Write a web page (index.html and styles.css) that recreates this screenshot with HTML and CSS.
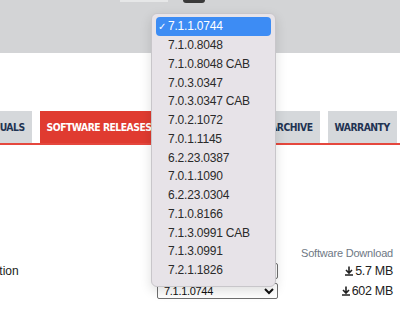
FILE: index.html
```html
<!DOCTYPE html>
<html lang="en">
<head>
    <meta charset="UTF-8">
    <meta name="viewport" content="width=device-width, initial-scale=1.0">
    <title>Software Releases</title>
    <link rel="stylesheet" href="styles.css">
</head>
<body>
    <header class="top">
        <span class="top-tab"></span>
        <span class="top-knob"></span>
    </header>

    <nav class="tabs">
        <a class="tab">MANUALS</a>
        <a class="tab active">SOFTWARE RELEASES</a>
        <a class="tab">PREVIOUS RELEASE ARCHIVE</a>
        <a class="tab">WARRANTY</a>
    </nav>

    <section class="downloads">
        <div class="row head">
            <span></span>
            <span></span>
            <span class="col-title">Software Download</span>
        </div>
        <div class="row">
            <span class="name">Application</span>
            <select class="version"><option>7.1.1.0744</option></select>
            <span class="size"><svg class="dl" viewBox="0 0 10 10"><path d="M5 0.5v6M2 4l3 3 3-3M1 9h8" /></svg>5.7 MB</span>
        </div>
        <div class="row">
            <span class="name"></span>
            <select class="version"><option>7.1.1.0744</option></select>
            <span class="size"><svg class="dl" viewBox="0 0 10 10"><path d="M5 0.5v6M2 4l3 3 3-3M1 9h8" /></svg>602 MB</span>
        </div>
    </section>

    <!-- the open native select menu, floating over the page -->
    <ul class="menu">
        <li class="picked"><span class="check">&#10003;</span>7.1.1.0744</li>
        <li>7.1.0.8048</li>
        <li>7.1.0.8048 CAB</li>
        <li>7.0.3.0347</li>
        <li>7.0.3.0347 CAB</li>
        <li>7.0.2.1072</li>
        <li>7.0.1.1145</li>
        <li>6.2.23.0387</li>
        <li>7.0.1.1090</li>
        <li>6.2.23.0304</li>
        <li>7.1.0.8166</li>
        <li>7.1.3.0991 CAB</li>
        <li>7.1.3.0991</li>
        <li>7.2.1.1826</li>
    </ul>
</body>
</html>
```

FILE: styles.css
```css
*, *::before, *::after {
    box-sizing: border-box;
}

body {
    margin: 0;
    width: 400px;
    overflow: hidden;
    color: #222;
    font: 12px/1 'Liberation Sans', Arial, sans-serif;
    background: #fff;
}

.top {
    display: flex;
    align-items: flex-start;
    height: 53px;
    padding-left: 120px;
    background-color: #d3d4d6;
}

.top-tab {
    width: 48px;
    height: 2px;
    background-color: #e6e7e8;
}

.top-knob {
    width: 22px;
    height: 3px;
    margin-left: 15px;
    border-radius: 0 0 11px 11px;
    background-color: #3a3a3a;
}

/* tab strip, its first tab runs off the left edge */
.tabs {
    display: flex;
    gap: 8px;
    margin: 58px 0 0 -30px;
    border-bottom: 2px solid #e5473d;
    white-space: nowrap;
}

.tab {
    display: block;
    height: 32px;
    padding: 0 7px;
    color: #1f3352;
    background-color: #d5d8db;
    font: bold 10.3px/33px 'DejaVu Sans Condensed', 'DejaVu Sans', sans-serif;
    font-stretch: condensed;
    letter-spacing: -0.5px;
}

.tab.active {
    color: #fff;
    background-color: #e03b30;
}

.downloads {
    display: grid;
    row-gap: 4px;
    margin: 103px 0 0 -40px;
}

.row {
    display: grid;
    grid-template-columns: 197px 121px 1fr;
    align-items: center;
}

.col-title {
    padding-right: 7px;
    text-align: right;
    color: #6e7884;
    font-size: 11px;
    letter-spacing: -0.2px;
}

.name {
    font-size: 12px;
}

.version {
    height: 16px;
    padding: 0 2px;
    border: 1px solid #6f6f6f;
    border-radius: 2px;
    background-color: #fff;
    color: #111;
    font: 11px 'Liberation Sans', sans-serif;
    letter-spacing: -0.3px;
}

.size {
    display: flex;
    justify-content: flex-end;
    align-items: center;
    padding-right: 7px;
    font-size: 12.5px;
    letter-spacing: -0.3px;
}

.dl {
    width: 10px;
    height: 10px;
    margin-right: 1px;
    fill: none;
    stroke: #222;
    stroke-width: 1.6;
}

.menu {
    position: absolute;
    top: 13px;
    left: 151px;
    width: 125px;
    margin: 0;
    padding: 3px 4px 6px;
    list-style: none;
    border: 1px solid #c8c6ca;
    border-radius: 6px;
    background-color: #e7e3e8;
    box-shadow: 0 4px 12px #0002;
    color: #2a2a2a;
    font: 12px 'Liberation Sans', Arial, sans-serif;
    letter-spacing: -0.2px;
}

.menu li {
    display: flex;
    align-items: center;
    height: 18.75px;
    padding-left: 12px;
    border-radius: 4px;
}

.menu .picked {
    padding-left: 2px;
    color: #fff;
    background-color: #3d8cf4;
}

.check {
    width: 10px;
    font-size: 10px;
}
```
